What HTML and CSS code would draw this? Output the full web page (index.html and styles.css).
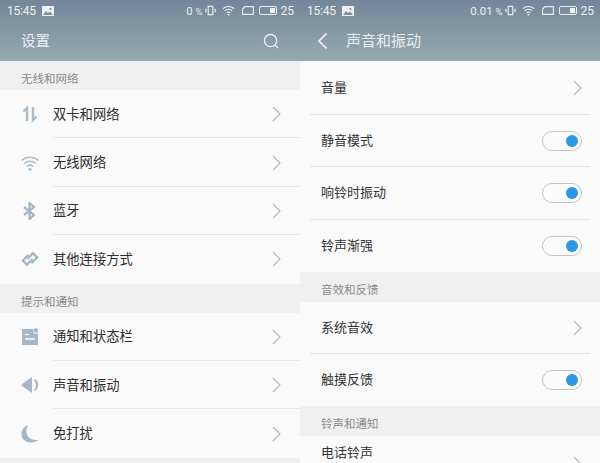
FILE: index.html
```html
<!DOCTYPE html>
<html lang="zh-CN">
<head>
  <meta charset="UTF-8" />
  <title>设置</title>
  <link rel="stylesheet" href="styles.css">
</head>
<body>
  <div class="screens">
    <!-- left: settings list -->
    <div class="screen">
      <div class="top">
        <div class="status">
          <span class="clock">15:45</span>
          <svg class="pic" viewBox="0 0 12 10"><path d="M0 0h12v10H0z" fill="#eef1f3"/><path d="M1 9l3-4 2 2 2-1.500L11 9z" fill="#7f919f"/><circle cx="8.500" cy="3" r="1" fill="#7f919f"/></svg>
          <span class="spacer"></span>
          <span class="speed">0 <small>%</small></span>
          <svg class="vib" viewBox="0 0 12 12"><path d="M3.500 1.500h5v9h-5z" fill="none" stroke="#e8edf0" stroke-width="1.300"/><path d="M1 4v4M11 4v4" stroke="#e8edf0" stroke-width="1.300"/></svg>
          <svg class="wifi" viewBox="0 0 14 11"><path d="M1 3.500c3.500-3 8.500-3 12 0M3 5.800c2.400-2 5.600-2 8 0M5 8c1.200-1 2.800-1 4 0" fill="none" stroke="#eef1f3" stroke-width="1.200"/><circle cx="7" cy="10" r="1" fill="#eef1f3"/></svg>
          <svg class="sim" viewBox="0 0 12 9"><path d="M3 .6h8.400v7.800H.6V3z" fill="none" stroke="#e8edf0" stroke-width="1.100"/></svg>
          <span class="batt"><i></i></span>
          <span class="level">25</span>
        </div>
        <div class="bar">
          <span class="title">设置</span>
          <svg class="search" viewBox="0 0 18 18"><circle cx="8" cy="8" r="6.500" fill="none" stroke="#f2f5f6" stroke-width="1.400"/><path d="M12.800 12.800l3.200 3.200" stroke="#f2f5f6" stroke-width="1.400"/></svg>
        </div>
      </div>

      <div class="group">无线和网络</div>
      <div class="row">
        <svg class="ico" viewBox="0 0 18 18"><path d="M6 16V3L2.500 6.500" fill="none" stroke="#a9bcc9" stroke-width="2.400"/><path d="M12 2v13l3.500-3.500" fill="none" stroke="#a9bcc9" stroke-width="2.400"/></svg>
        <span class="name">双卡和网络</span>
        <svg class="arrow" viewBox="0 0 9 16"><path d="M1 1l7 7-7 7" fill="none" stroke="#b4b4b4" stroke-width="1.100"/></svg>
      </div>
      <div class="row">
        <svg class="ico" viewBox="0 0 18 18"><path d="M.5 6.500c4.700-4.300 12.300-4.300 17 0M3.200 9.500c3.200-2.900 8.400-2.900 11.600 0M5.900 12.400c1.800-1.500 4.400-1.500 6.200 0" fill="none" stroke="#a9bcc9" stroke-width="1.500"/><circle cx="9" cy="15.200" r="1.500" fill="#a9bcc9"/></svg>
        <span class="name">无线网络</span>
        <svg class="arrow" viewBox="0 0 9 16"><path d="M1 1l7 7-7 7" fill="none" stroke="#b4b4b4" stroke-width="1.100"/></svg>
      </div>
      <div class="row">
        <svg class="ico" viewBox="0 0 18 18"><path d="M3 5l10 8-4.500 4V1L13 5 3 13" fill="none" stroke="#a3b7c4" stroke-width="2.300"/></svg>
        <span class="name">蓝牙</span>
        <svg class="arrow" viewBox="0 0 9 16"><path d="M1 1l7 7-7 7" fill="none" stroke="#b4b4b4" stroke-width="1.100"/></svg>
      </div>
      <div class="row last">
        <svg class="ico" viewBox="0 0 18 18"><path d="M6.500 9L12 3.200 16.200 7.400 10.500 13" fill="none" stroke="#a3b7c4" stroke-width="2.300"/><path d="M11.500 9L6 14.800 1.800 10.600 7.500 5" fill="none" stroke="#a3b7c4" stroke-width="2.300"/></svg>
        <span class="name">其他连接方式</span>
        <svg class="arrow" viewBox="0 0 9 16"><path d="M1 1l7 7-7 7" fill="none" stroke="#b4b4b4" stroke-width="1.100"/></svg>
      </div>

      <div class="group">提示和通知</div>
      <div class="row">
        <svg class="ico" viewBox="0 0 18 18"><path d="M1 1h11.500v4.500H17V17H1z" fill="#a3b9c7"/><circle cx="15" cy="2.500" r="2.200" fill="#a3b9c7"/><path d="M4 11h10" stroke="#fafafa" stroke-width="1.600"/><path d="M4 6.500h4" stroke="#fafafa" stroke-width="1.200"/></svg>
        <span class="name">通知和状态栏</span>
        <svg class="arrow" viewBox="0 0 9 16"><path d="M1 1l7 7-7 7" fill="none" stroke="#b4b4b4" stroke-width="1.100"/></svg>
      </div>
      <div class="row">
        <svg class="ico" viewBox="0 0 18 18"><path d="M0 9l4.500-3.500L11 1v16l-6.500-4.500z" fill="#a3b9c7"/><path d="M13.500 3.500c3.600 3 3.600 8 0 11" fill="none" stroke="#a3b9c7" stroke-width="2"/></svg>
        <span class="name">声音和振动</span>
        <svg class="arrow" viewBox="0 0 9 16"><path d="M1 1l7 7-7 7" fill="none" stroke="#b4b4b4" stroke-width="1.100"/></svg>
      </div>
      <div class="row last">
        <svg class="ico" viewBox="0 0 18 18"><path d="M7 0C1 2-.5 8 1 12c2 5.500 10.500 7.500 16.500 3C11.500 15.500 7.500 13 6 9.500 5 6.500 5.500 3 7 0z" fill="#a3b9c7"/></svg>
        <span class="name">免打扰</span>
        <svg class="arrow" viewBox="0 0 9 16"><path d="M1 1l7 7-7 7" fill="none" stroke="#b4b4b4" stroke-width="1.100"/></svg>
      </div>
      <div class="group"></div>
    </div>

    <!-- right: sound and vibration -->
    <div class="screen">
      <div class="top">
        <div class="status">
          <span class="clock">15:45</span>
          <svg class="pic" viewBox="0 0 12 10"><path d="M0 0h12v10H0z" fill="#eef1f3"/><path d="M1 9l3-4 2 2 2-1.500L11 9z" fill="#7f919f"/><circle cx="8.500" cy="3" r="1" fill="#7f919f"/></svg>
          <span class="spacer"></span>
          <span class="speed">0.01 <small>%</small></span>
          <svg class="vib" viewBox="0 0 12 12"><path d="M3.500 1.500h5v9h-5z" fill="none" stroke="#e8edf0" stroke-width="1.300"/><path d="M1 4v4M11 4v4" stroke="#e8edf0" stroke-width="1.300"/></svg>
          <svg class="wifi" viewBox="0 0 14 11"><path d="M1 3.500c3.500-3 8.500-3 12 0M3 5.800c2.400-2 5.600-2 8 0M5 8c1.200-1 2.800-1 4 0" fill="none" stroke="#eef1f3" stroke-width="1.200"/><circle cx="7" cy="10" r="1" fill="#eef1f3"/></svg>
          <svg class="sim" viewBox="0 0 12 9"><path d="M3 .6h8.400v7.800H.6V3z" fill="none" stroke="#e8edf0" stroke-width="1.100"/></svg>
          <span class="batt"><i></i></span>
          <span class="level">25</span>
        </div>
        <div class="bar">
          <svg class="back" viewBox="0 0 11 18"><path d="M9.500 1.500L2 9l7.500 7.500" fill="none" stroke="#f2f5f6" stroke-width="1.700"/></svg>
          <span class="title sub">声音和振动</span>
        </div>
      </div>

      <div class="item first">
        <span class="label">音量</span>
        <svg class="arrow" viewBox="0 0 9 16"><path d="M1 1l7 7-7 7" fill="none" stroke="#b4b4b4" stroke-width="1.100"/></svg>
      </div>
      <div class="item">
        <span class="label">静音模式</span>
        <span class="toggle"><i></i></span>
      </div>
      <div class="item">
        <span class="label">响铃时振动</span>
        <span class="toggle"><i></i></span>
      </div>
      <div class="item last">
        <span class="label">铃声渐强</span>
        <span class="toggle"><i></i></span>
      </div>

      <div class="group tall">音效和反馈</div>
      <div class="item">
        <span class="label">系统音效</span>
        <svg class="arrow" viewBox="0 0 9 16"><path d="M1 1l7 7-7 7" fill="none" stroke="#b4b4b4" stroke-width="1.100"/></svg>
      </div>
      <div class="item last">
        <span class="label">触摸反馈</span>
        <span class="toggle"><i></i></span>
      </div>

      <div class="group tall">铃声和通知</div>
      <div class="item ring">
        <span class="label">电话铃声</span>
        <svg class="arrow" viewBox="0 0 9 16"><path d="M1 1l7 7-7 7" fill="none" stroke="#b4b4b4" stroke-width="1.100"/></svg>
      </div>
    </div>
  </div>
</body>
</html>
```

FILE: styles.css
```css
html, body {
  margin: 0;
  height: 463px;
  overflow: hidden;
}
body {
  font-family: "Noto Sans CJK SC", "Liberation Sans", sans-serif;
  background: #fafafa;
  color: #333;
}
.screens {
  display: flex;
  height: 463px;
  overflow: hidden;
}
.screen {
  width: 300px;
  height: 463px;
  overflow: hidden;
  flex: none;
  background: #fafafa;
}
.top {
  height: 61px;
  background: linear-gradient(#74869a, #95aaae);
  color: #eef1f3;
}
.status {
  display: flex;
  align-items: center;
  height: 21px;
  padding: 0 6px 0 7px;
  font-family: "Roboto", sans-serif;
  font-size: 11px;
}
.clock {
  font-size: 12px;
  letter-spacing: -.2px;
}
.pic {
  width: 12px;
  height: 10px;
  margin-left: 6px;
}
.spacer {
  flex: 1;
}
.speed {
  font-size: 11.500px;
}
.speed small {
  font-size: 9.500px;
}
.vib {
  width: 11px;
  height: 11px;
  margin-left: 2px;
}
.wifi {
  width: 13px;
  height: 11px;
  margin-left: 6px;
}
.sim {
  width: 12px;
  height: 9px;
  margin-left: 7px;
}
.batt {
  display: flex;
  justify-content: flex-end;
  box-sizing: border-box;
  width: 18px;
  height: 9px;
  margin-left: 5px;
  padding: 1px;
  border: 1px solid #e8edf0;
  border-radius: 2px;
}
.batt i {
  width: 5px;
  background: #eef1f3;
}
.level {
  margin-left: 4px;
  font-size: 12px;
}
.bar {
  display: flex;
  align-items: center;
  height: 40px;
  padding: 0 21px;
}
.title {
  margin-bottom: 3px;
  font-size: 14.500px;
  color: #e9eef0;
}
.title.sub {
  font-size: 15px;
  margin-left: 18px;
}
.search {
  width: 17px;
  height: 17px;
  margin-left: auto;
  margin-right: -1px;
}
.back {
  width: 11px;
  height: 18px;
  margin-left: -4px;
}
.group {
  box-sizing: border-box;
  height: 29px;
  padding: 3px 0 0 21px;
  line-height: 29px;
  background: #f0f0f0;
  font-size: 11.500px;
  color: #8a8a8a;
}
.group.tall {
  height: 30px;
}
.row {
  display: flex;
  align-items: center;
  position: relative;
  height: 48.400px;
  padding-left: 21px;
  padding-right: 19px;
}
.row::after {
  content: "";
  position: absolute;
  left: 53px;
  right: 0;
  bottom: 0;
  height: 1px;
  background: #e7e7e7;
}
.row.last::after {
  display: none;
}
.ico {
  width: 18px;
  height: 18px;
  flex: none;
}
.name {
  margin-left: 14px;
  margin-bottom: 2px;
  font-size: 13.300px;
  color: #2e2e2e;
}
.arrow {
  width: 9px;
  height: 16px;
  margin-left: auto;
  flex: none;
}
.item {
  display: flex;
  align-items: center;
  position: relative;
  height: 52.300px;
  padding: 0 18px 0 21px;
}
.item.first {
  height: 54px;
}
.item::after {
  content: "";
  position: absolute;
  left: 10px;
  right: 10px;
  bottom: 0;
  height: 1px;
  background: #e4e4e4;
}
.item.last::after {
  display: none;
}
.item.ring {
  align-items: flex-start;
  padding-top: 6px;
}
.item.ring .arrow {
  margin-top: 14px;
}
.label {
  margin-bottom: 3px;
  font-size: 13px;
  color: #333;
}
.toggle {
  display: flex;
  align-items: center;
  justify-content: flex-end;
  box-sizing: border-box;
  width: 40px;
  height: 20px;
  margin-left: auto;
  padding-right: 3px;
  border: 1px solid #c4c4c4;
  border-radius: 10px;
  background: #fcfcfc;
}
.toggle i {
  width: 12px;
  height: 12px;
  border-radius: 50%;
  background: #2a98e4;
}
```
